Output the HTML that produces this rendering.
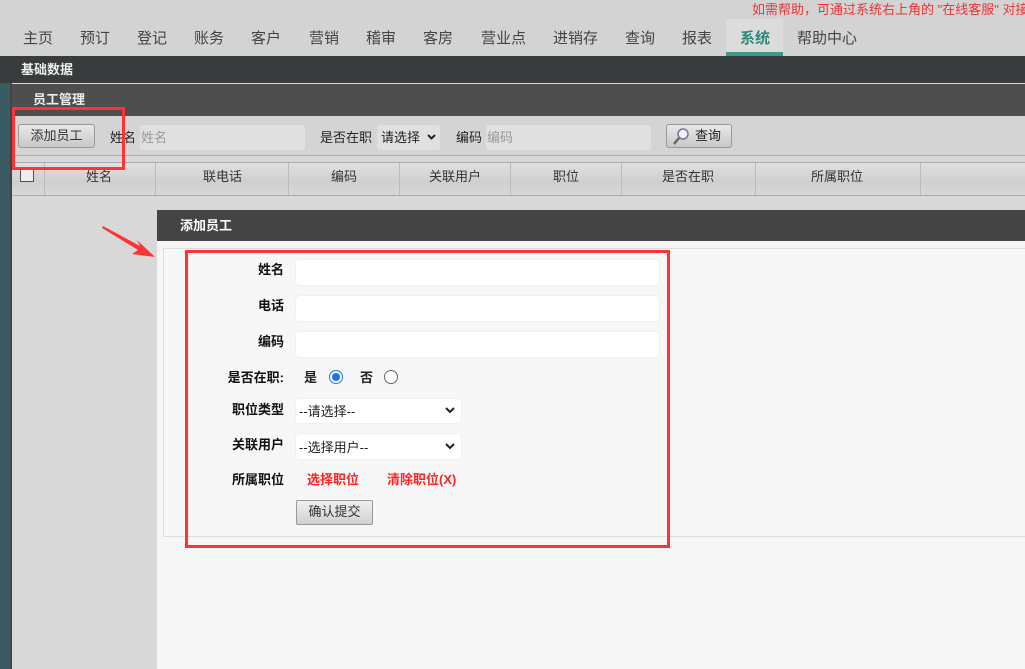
<!DOCTYPE html>
<html><head><meta charset="utf-8"><style>
*{margin:0;padding:0;box-sizing:border-box}
body{width:1025px;height:669px;overflow:hidden;position:relative;background:#d8d8d9;font-family:"Liberation Sans","Noto Sans CJK SC",sans-serif;font-size:13px;color:#222}
.a{position:absolute}
.nav span{position:absolute;top:27px;font-size:15px;color:#444}
.f{position:absolute;left:296px;width:363px;height:25px;background:#fff;border-radius:3px;box-shadow:0 0 1px #ccc}
.lb{position:absolute;right:741px;font-weight:bold;font-size:13px;color:#111;text-align:right;white-space:nowrap}
.th{position:absolute;top:166px;font-size:13px;color:#333}
.sep{position:absolute;top:163px;width:1px;height:32px;background:#bbb}
.chev{position:absolute;right:6px;top:8px}
</style></head><body>
<div class="a" style="left:0;top:0;width:1025px;height:56px;background:#d3d3d3"></div>
<div class="a" style="left:752px;top:-1px;font-size:13px;color:#e33;white-space:nowrap">如需帮助，可通过系统右上角的 "在线客服" 对接</div>
<div class="a" style="left:726px;top:19px;width:57px;height:37px;background:#dcdcdc"></div>
<div class="a" style="left:726px;top:52px;width:57px;height:4px;background:#3a9a8c"></div>
<div class="nav">
<span style="left:23px">主页</span><span style="left:80px">预订</span><span style="left:137px">登记</span><span style="left:194px">账务</span><span style="left:251px">客户</span><span style="left:309px">营销</span><span style="left:366px">稽审</span><span style="left:423px">客房</span><span style="left:481px">营业点</span><span style="left:553px">进销存</span><span style="left:625px">查询</span><span style="left:682px">报表</span><span style="left:740px;color:#2a8a7c;font-weight:bold">系统</span><span style="left:797px">帮助中心</span>
</div>
<div class="a" style="left:0;top:56px;width:1025px;height:27px;background:#383c3d"></div>
<div class="a" style="left:21px;top:59px;color:#eee;font-weight:bold;font-size:13px">基础数据</div>
<div class="a" style="left:0;top:83px;width:10px;height:586px;background:#3a5a64"></div>
<div class="a" style="left:10px;top:83px;width:2px;height:586px;background:#444"></div>
<div class="a" style="left:12px;top:84px;width:1013px;height:32px;background:#4e4e4e"></div>
<div class="a" style="left:33px;top:89px;color:#eee;font-weight:bold;font-size:13px">员工管理</div>
<div class="a" style="left:12px;top:116px;width:1013px;height:40px;background:#d4d4d4;border-bottom:1px solid #aaa"></div>
<div class="a" style="left:18px;top:124px;width:77px;height:24px;border:1px solid #999;border-radius:3px;background:linear-gradient(#e8e8e8,#c8c8c8);text-align:center;line-height:21px;font-size:13px;color:#333">添加员工</div>
<div class="a" style="left:110px;top:127px">姓名</div>
<div class="a" style="left:140px;top:125px;width:165px;height:25px;background:#e0e0e0;border-radius:3px;padding:2px 1px;color:#999">姓名</div>
<div class="a" style="left:320px;top:127px">是否在职</div>
<div class="a" style="left:377px;top:125px;width:63px;height:25px;background:#e0e0e0;border-radius:3px;padding:2px 4px">请选择<svg style="position:absolute;right:4px;top:9px" width="9" height="6"><path d="M1 1L4.5 4.5L8 1" stroke="#222" stroke-width="2" fill="none"/></svg></div>
<div class="a" style="left:456px;top:127px">编码</div>
<div class="a" style="left:486px;top:125px;width:165px;height:25px;background:#e0e0e0;border-radius:3px;padding:2px 1px;color:#999">编码</div>
<div class="a" style="left:666px;top:124px;width:66px;height:24px;border:1px solid #999;border-radius:3px;background:linear-gradient(#e8e8e8,#c8c8c8);line-height:21px;font-size:13px;padding-left:28px">查询</div>
<svg class="a" style="left:671px;top:126px" width="20" height="20"><circle cx="12" cy="8" r="5" fill="#eef" stroke="#778" stroke-width="1.5"/><line x1="8" y1="12" x2="3" y2="18" stroke="#666" stroke-width="2.5"/></svg>
<div class="a" style="left:12px;top:162px;width:1013px;height:34px;background:linear-gradient(#e0e0e0,#cfcfcf 60%,#d8d8d8);border-top:1px solid #aaa;border-bottom:1px solid #aaa"></div>
<div class="a" style="left:20px;top:168px;width:14px;height:14px;border:1px solid #456;background:#eee"></div>
<div class="sep" style="left:44px"></div><div class="sep" style="left:155px"></div><div class="sep" style="left:288px"></div><div class="sep" style="left:399px"></div><div class="sep" style="left:510px"></div><div class="sep" style="left:621px"></div><div class="sep" style="left:755px"></div><div class="sep" style="left:920px"></div>
<div class="th" style="left:86px">姓名</div><div class="th" style="left:203px">联电话</div><div class="th" style="left:331px">编码</div><div class="th" style="left:429px">关联用户</div><div class="th" style="left:553px">职位</div><div class="th" style="left:662px">是否在职</div><div class="th" style="left:811px">所属职位</div>
<div class="a" style="left:157px;top:210px;width:868px;height:459px;background:#f6f6f6"></div>
<div class="a" style="left:157px;top:210px;width:868px;height:31px;background:#444"></div>
<div class="a" style="left:180px;top:215px;color:#fff;font-weight:bold;font-size:13px">添加员工</div>
<div class="a" style="left:163px;top:248px;width:870px;height:289px;border:1px solid #ddd;background:#f7f7f7"></div>
<div class="lb" style="top:259px">姓名</div><div class="f" style="top:260px"></div>
<div class="lb" style="top:295px">电话</div><div class="f" style="top:296px"></div>
<div class="lb" style="top:331px">编码</div><div class="f" style="top:332px"></div>
<div class="lb" style="top:367px">是否在职:</div>
<div class="a" style="left:304px;top:367px;font-weight:bold">是</div>
<div class="a" style="left:329px;top:370px;width:14px;height:14px;border-radius:50%;border:1px solid #1a73e8;background:radial-gradient(#1a73e8 3.5px,#fff 4.5px)"></div>
<div class="a" style="left:360px;top:367px;font-weight:bold">否</div>
<div class="a" style="left:384px;top:370px;width:14px;height:14px;border-radius:50%;border:1px solid #666;background:#fff"></div>
<div class="lb" style="top:399px">职位类型</div>
<div class="a" style="left:296px;top:399px;width:165px;height:24px;background:#fff;border-radius:3px;box-shadow:0 0 1px #ccc;padding:2px 3px;font-size:13px">--请选择--<svg class="chev" width="10" height="7"><path d="M1 1L5 5L9 1" stroke="#222" stroke-width="2" fill="none"/></svg></div>
<div class="lb" style="top:434px">关联用户</div>
<div class="a" style="left:296px;top:434px;width:165px;height:25px;background:#fff;border-radius:3px;box-shadow:0 0 1px #ccc;padding:3px 3px;font-size:13px">--选择用户--<svg class="chev" width="10" height="7" style="top:9px"><path d="M1 1L5 5L9 1" stroke="#222" stroke-width="2" fill="none"/></svg></div>
<div class="lb" style="top:469px">所属职位</div>
<div class="a" style="left:307px;top:469px;color:#f22;font-weight:bold">选择职位</div>
<div class="a" style="left:387px;top:469px;color:#f22;font-weight:bold">清除职位(X)</div>
<div class="a" style="left:296px;top:500px;width:77px;height:25px;border:1px solid #999;border-radius:2px;background:linear-gradient(#f0f0f0,#d0d0d0);text-align:center;line-height:21px;font-size:13px;color:#333">确认提交</div>
<div class="a" style="left:185px;top:250px;width:485px;height:298px;border:3px solid #f33"></div>
<div class="a" style="left:12px;top:107px;width:113px;height:63px;border:3px solid #f33"></div>
<svg class="a" style="left:100px;top:222px" width="60" height="42"><polygon points="3,4 40,24 37,18 55,35 32,32 38,28 2,6" fill="#f33"/></svg>
</body></html>
